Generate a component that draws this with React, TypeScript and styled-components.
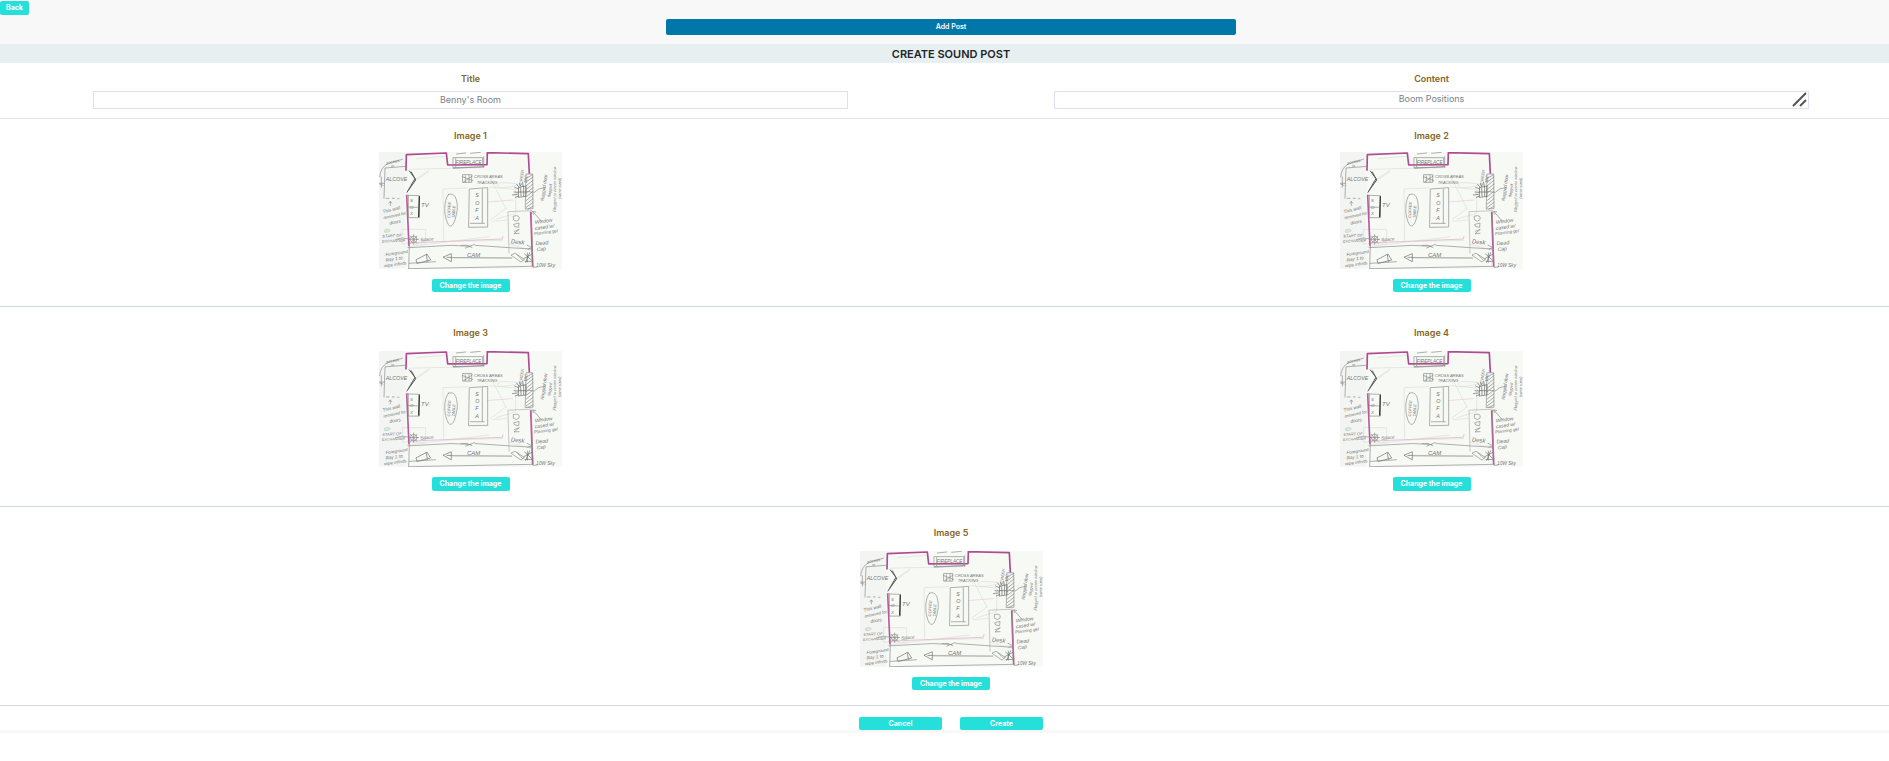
import React from "react";
import styled, { createGlobalStyle } from "styled-components";

const GlobalStyle = createGlobalStyle`
  *, *::before, *::after { box-sizing: border-box; }
  body {
    margin: 0;
    background: #ffffff;
    color: #212529;
    font-family: Inter, "Open Sans", sans-serif;
    overflow-x: hidden;
  }
`;

const Viewport = styled.div`
  overflow-x: clip;
`;

const Page = styled.div`
  margin-right: -13px;
  display: flex;
  flex-direction: column;
`;

const TopBar = styled.header`
  display: flex;
  flex-direction: column;
  align-items: flex-start;
  gap: 4px;
  padding: 1px 0 9px;
  background: #f8f8f8;
`;

const Button = styled.button<{ $width?: string; $height?: number; $blue?: boolean }>`
  display: flex;
  align-items: center;
  justify-content: center;
  width: ${(p) => p.$width ?? "auto"};
  height: ${(p) => p.$height ?? 13}px;
  padding: 0 6px;
  border: 0;
  border-radius: 2px;
  background: ${(p) => (p.$blue ? "#0077a8" : "#25dfda")};
  color: #ffffff;
  font-family: inherit;
  font-size: 7px;
  font-weight: ${(p) => (p.$blue ? 600 : 700)};
  line-height: 10px;
  white-space: nowrap;
  cursor: pointer;
`;

const AddButton = styled(Button)`
  align-self: center;
`;

const Heading = styled.h1`
  margin: 0;
  padding-top: 1px;
  background: #e7eff1;
  font-size: 11px;
  font-weight: 600;
  line-height: 18px;
  text-align: center;
`;

const Row = styled.section<{ $single?: boolean; $line?: string }>`
  display: grid;
  grid-template-columns: ${(p) => (p.$single ? "1fr" : "1fr 1fr")};
  column-gap: 20px;
  border-bottom: 1px solid ${(p) => p.$line ?? "#cdd8db"};
`;

const Field = styled.div`
  display: flex;
  flex-direction: column;
  align-items: center;
  gap: 6px;
  padding: 10px 93px 9px;
`;

const Label = styled.label`
  color: #84661c;
  font-size: 9px;
  font-weight: 600;
  line-height: 12px;
`;

const controlStyle = `
  display: block;
  width: 100%;
  height: 18px;
  margin: 0;
  padding: 0 16px 2px;
  border: 1px solid #e0dff5;
  border-radius: 0;
  outline: 0;
  background: #ffffff;
  color: #7b818a;
  font-family: inherit;
  font-size: 9px;
  line-height: 14px;
  text-align: center;
`;

const TextInput = styled.input`${controlStyle}`;
const TextArea = styled.textarea`
  ${controlStyle}
  resize: none;
  overflow: hidden;
`;

const AreaWrap = styled.div`
  position: relative;
  width: 100%;
`;

const Grip = styled.svg`
  position: absolute;
  right: 2px;
  bottom: 2px;
  pointer-events: none;
`;

const ImageCell = styled.div<{ $first?: boolean }>`
  display: flex;
  flex-direction: column;
  align-items: center;
  padding: ${(p) => (p.$first ? "11px 0 14px" : "20px 0 15px")};
`;

const ImageTitle = styled.h2`
  margin: 0;
  color: #84661c;
  font-size: 9px;
  font-weight: 600;
  line-height: 12px;
`;

const Picture = styled.svg<{ $first?: boolean }>`
  display: block;
  width: 183px;
  height: ${(p) => (p.$first ? 117 : 116)}px;
  margin: ${(p) => (p.$first ? "10px 0" : "12px 0 10px")};
`;

const Actions = styled.footer`
  display: flex;
  justify-content: center;
  gap: 18px;
  padding: 11px 0 0;
  border-bottom: 3px solid #f8f8f8;
`;

type Note = [number, number, string, number, number?];

const notes: Note[] = [
  [20, 88, "ALCOVE", 16],
  [22, 38, "access", 13, -12],
  [37, 44, "to", 10],
  [230, 36, "FIREPLACE", 14],
  [285, 79, "CROSS AREAS", 12],
  [293, 95, "TRACKING", 12],
  [126, 166, "TV", 18],
  [12, 184, "This wall", 14, -14],
  [14, 202, "removed for", 13, -12],
  [32, 218, "doors", 14, -10],
  [10, 257, "START OF", 12, -3],
  [9, 272, "EXCHANGER", 11, -3],
  [124, 268, "Space", 14, -4],
  [20, 312, "Foreground", 13, -8],
  [20, 329, "Ray 1 to", 14, -8],
  [16, 346, "wipe infinds", 13, -8],
  [264, 316, "CAM", 18],
  [395, 274, "Desk", 18, 5],
  [468, 216, "Window", 15, -8],
  [468, 234, "cased w/", 15, -8],
  [466, 250, "Planning gel", 13, -8],
  [470, 280, "Dead", 16, -5],
  [474, 298, "Cap", 15, -8],
  [472, 345, "10W Sky", 14],
  [429, 104, "SCREEN", 12, -84],
  [443, 94, "TBC", 12, -84],
  [494, 148, "Ragged door", 14, -82],
  [514, 136, "flagged", 12, -82],
  [532, 180, "Flagged to create window", 12, -90],
  [545, 140, "(same sized)", 11, -90],
];

const letters: Note[] = [
  [93, 151, "S", 13], [93, 170, "O", 13], [93, 190, "X", 13],
  [289, 136, "S", 16], [289, 158, "O", 16], [289, 180, "F", 16], [289, 203, "A", 16],
];

function FloorPlan({ first, label }: { first?: boolean; label: string }) {
  return (
    <Picture $first={first} viewBox="0 0 549 351" preserveAspectRatio="none" role="img" aria-label={label}>
      <rect width="549" height="351" fill="#f7f9f5" />
      <path d="M0 0H78V348H0Z" fill="#f1f3ef" opacity=".55" />
      <g fill="none" stroke="#dcdeda" strokeWidth="2">
        <path d="M90 52L310 47M192 111L194 269 372 265M192 111L268 108M70 232H140V276H70ZM100 88L151 54M92 98L150 58M112 20L205 12M330 105L410 112 410 184 350 202M335 204L382 168M338 208L384 204M330 70L382 172" />
        <path d="M362 92Q340 114 396 104T362 92M80 285L330 254M390 276L460 296" />
        <path d="M324 150L402 144" stroke="#e6cbdb" />
        <path d="M84 273L370 261 372 252" stroke="#e5c3d4" strokeWidth="3" />
      </g>
      <g fill="none" stroke="#b04a93" strokeWidth="5" strokeLinejoin="round">
        <path d="M81 56L82 8 202 3 206 39 324 38 325 2 448 5 451 65" />
        <path d="M83 128L90 282M455 179L461 344" stroke="#b95c9c" strokeWidth="5" />
      </g>
      <g fill="none" stroke="#898a88" strokeWidth="2" strokeLinecap="round" strokeLinejoin="round">
        <path d="M81 43L18 48 15 139M56 140H60M2 75Q4 46 28 34L70 22M3 97L12 100M7 75V106M0 94H15M22 139H30M40 139H46" />
        <path d="M86 130L121 131V197H88V130M88 165L115 166M91 283L89 350M34 149V160M30 153L34 148 38 153" />
        <path d="M121 134L119 194" stroke="#343737" strokeWidth="4" />
        <path d="M91 57L108 80 84 121M97 60L110 84 88 115" stroke="#565959" strokeWidth="3" />
        <path d="M223 17H311V45L223 47ZM230 20V45M314 14V47M223 49L315 44M232 6L260 3M275 4L304 1" />
        <path d="M252 68H278V91H252ZM259 72V90M270 70V90M250 74L281 86M280 72L254 90" />
        <path d="M272 111L326 107V225L270 226ZM310 111V213M274 214L316 214" />
        <path d="M208 128C194 145 193 191 208 218 217 228 227 221 235 171 235 132 223 121 208 128Z" />
        <path d="M87 287L217 280 275 283M288 280L390 287 456 291M246 280Q264 276 279 286M260 288L286 277M90 350L458 343M91 334L170 329" />
        <path d="M218 317L398 318M193 315L217 305V328ZM204 316L216 316M112 323L144 306 155 324 115 334ZM142 308L145 328" stroke="#6b6d6c" />
        <path d="M397 310L426 330 436 322 409 304ZM414 308L432 326M457 180L462 346 474 345" />
        <path d="M387 179L390 303M390 179L458 176" stroke="#adafac" />
        <path d="M442 66H461L462 170 440 171Z" />
        <path d="M442 79L461 68M442 90L462 75M442 101L462 85M442 112L462 96M442 123L462 107M442 134L462 118M442 145L462 129M442 156L462 140M442 166L462 151M447 171L462 163" stroke="#7c7f7e" />
        <path d="M420 106L441 102V133L419 136ZM425 108L426 132M434 104V132M418 120H440M407 106L418 111M405 120L417 121M409 136L419 132M413 97L421 107M421 94L425 103M431 92L433 103M400 129L415 127" stroke="#606363" />
        <path d="M440 118L466 121 479 111 500 106M462 179L487 208M463 187L461 178 470 180M444 279L458 287 447 291" />
        <path d="M437 306L457 324M434 320L458 307M445 303V330M438 328L460 328M452 302L440 331" stroke="#6b6e6d" />
        <circle cx="104" cy="262" r="10" />
        <path d="M90 262H119M104 248V277M94 252L114 274M114 252L94 274M50 262Q70 254 91 261" />
        <path d="M404 192Q424 187 420 203 412 212 404 204ZM405 217L420 213 419 226 408 224ZM406 238L421 232 405 245 420 244" />
      </g>
      <path d="M16 234Q29 227 34 235 32 242 17 241Z" fill="#d8eadb" stroke="#a4bcab" />
      <g fill="#737675" fontFamily="Liberation Sans, sans-serif" fontStyle="italic">
        {[...notes, ...letters].map(([x, y, text, size, angle = 0], i) => (
          <text key={i} x={x} y={y} fontSize={size} transform={`rotate(${angle} ${x} ${y})`}>{text}</text>
        ))}
        <text x="213" y="198" fontSize="12" transform="rotate(-87 213 198)">COFFEE</text>
        <text x="227" y="198" fontSize="12" transform="rotate(-87 227 198)">TABLE</text>
      </g>
    </Picture>
  );
}

function ImageSlot({ number, first, buttonHeight }: { number: number; first?: boolean; buttonHeight?: number }) {
  return (
    <ImageCell $first={first}>
      <ImageTitle>Image {number}</ImageTitle>
      <FloorPlan first={first} label={`Floor plan ${number}`} />
      <Button type="button" $width="78px" $height={buttonHeight}>Change the image</Button>
    </ImageCell>
  );
}

export default function App() {
  return (
    <Viewport>
      <GlobalStyle />
      <Page>
        <TopBar>
          <Button type="button" $height={14}>Back</Button>
          <AddButton type="button" $blue $width="30%" $height={16}>Add Post</AddButton>
        </TopBar>
        <main>
          <Heading>CREATE SOUND POST</Heading>
          <form onSubmit={(e) => e.preventDefault()}>
            <Row $line="#e3e5e6">
              <Field>
                <Label htmlFor="title">Title</Label>
                <TextInput id="title" defaultValue="Benny's Room" />
              </Field>
              <Field>
                <Label htmlFor="content">Content</Label>
                <AreaWrap>
                  <TextArea id="content" rows={1} defaultValue="Boom Positions" />
                  <Grip width="15" height="15" viewBox="0 0 15 15" fill="none" stroke="#555555" strokeWidth="2" aria-hidden="true">
                    <path d="M1 14L14 1M8 14L14 8" />
                  </Grip>
                </AreaWrap>
              </Field>
            </Row>
            <Row>
              <ImageSlot number={1} first />
              <ImageSlot number={2} first />
            </Row>
            <Row>
              <ImageSlot number={3} buttonHeight={14} />
              <ImageSlot number={4} buttonHeight={14} />
            </Row>
            <Row $single>
              <ImageSlot number={5} />
            </Row>
            <Actions>
              <Button type="button" $width="83px">Cancel</Button>
              <Button type="submit" $width="83px">Create</Button>
            </Actions>
          </form>
        </main>
      </Page>
    </Viewport>
  );
}
